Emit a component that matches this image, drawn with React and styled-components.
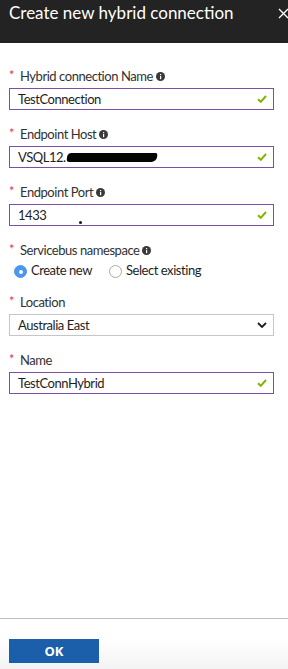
import React from "react";
import styled, { createGlobalStyle } from "styled-components";

const Global = createGlobalStyle`
  html, body { margin: 0; padding: 0; background: #fff; }
  body { font-family: Lato, "Open Sans", sans-serif; color: #323232; }
  * { box-sizing: border-box; }
`;

const Blade = styled.div`
  display: flex;
  flex-direction: column;
  width: 288px;
  height: 669px;
  overflow: hidden;
`;

const Header = styled.header`
  position: relative;
  height: 43px;
  background: #232323;
  color: #fff;
  padding: 2px 0 0 9px;
  flex: none;
`;

const Title = styled.h1`
  margin: 0;
  font-weight: 400;
  font-size: 17px;
  line-height: 22px;
  letter-spacing: 0;
  white-space: nowrap;
`;

const Close = styled.button`
  position: absolute;
  top: 8px;
  right: -1px;
  width: 11px;
  height: 11px;
  padding: 0;
  border: 0;
  background: none;
  display: flex;
`;

const Body = styled.main`
  flex: 1;
  padding: 25px 14px 0 9px;
  display: flex;
  flex-direction: column;
  gap: 16px;
  letter-spacing: -0.45px;
`;

const Field = styled.div`
  display: flex;
  flex-direction: column;
  gap: 4px;
`;

const Label = styled.label`
  display: flex;
  align-items: center;
  height: 16px;
  font-size: 13px;
  line-height: 16px;
  color: #323232;
`;

const Star = styled.span`
  color: #e0393e;
  font-size: 13px;
  width: 11px;
  margin-top: -2px;
`;

const Info = styled.span`
  display: inline-flex;
  margin-left: 3px;
`;

const Box = styled.div`
  position: relative;
  display: flex;
  align-items: center;
  height: 22px;
  border: 1px solid ${(p) => (p.$valid ? "#7c4ea4" : "#c6c6c6")};
  padding: 0 6px 0 8px;
  font-size: 13px;
  color: #1e1e1e;
  background: #fff;
`;

const Value = styled.span`
  flex: 1;
  display: flex;
  align-items: center;
  white-space: nowrap;
`;

const Redaction = styled.span`
  display: inline-block;
  width: 90px;
  height: 9px;
  margin-left: 1px;
  background: #050505;
  border-radius: 4px 2px 5px 3px;
  transform: skewX(-8deg);
`;

const Speck = styled.span`
  position: absolute;
  left: 69px;
  bottom: 1px;
  width: 3px;
  height: 3px;
  border-radius: 50%;
  background: #111;
`;

const RadioRow = styled.div`
  display: flex;
  align-items: center;
  height: 16px;
  padding-left: 5px;
  font-size: 13px;
  color: #1e1e1e;
`;

const RadioOption = styled.span`
  display: flex;
  align-items: center;
  gap: 4px;
  margin-right: 17px;
`;

const RadioDot = styled.span`
  width: 13px;
  height: 13px;
  border-radius: 50%;
  margin-top: 3px;
  display: flex;
  align-items: center;
  justify-content: center;
  background: ${(p) => (p.$on ? "#4a96f0" : "#fff")};
  border: 1px solid ${(p) => (p.$on ? "#4a96f0" : "#a9a9a9")};
  &::after {
    content: "";
    width: 4px;
    height: 4px;
    border-radius: 50%;
    background: ${(p) => (p.$on ? "#fff" : "transparent")};
  }
`;

const Footer = styled.footer`
  flex: none;
  height: 51px;
  border-top: 1px solid #bdbdbd;
  padding: 20px 0 0 9px;
  background: linear-gradient(to bottom, #fff 40%, #f3f3f3 100%);
`;

const OkButton = styled.button`
  width: 90px;
  height: 24px;
  border: 0;
  background: #1b5ea9;
  color: #fff;
  font-family: "Open Sans", sans-serif;
  font-weight: 700;
  font-size: 13px;
  padding: 0;
`;

const Check = () => (
  <svg width="10" height="8" viewBox="0 0 10 8">
    <path d="M1 4.2 L3.8 6.8 L9 1" fill="none" stroke="#83b200" strokeWidth="2" />
  </svg>
);

const InfoIcon = () => (
  <svg width="9" height="9" viewBox="0 0 9 9">
    <circle cx="4.5" cy="4.5" r="4.5" fill="#3a3a3a" />
    <rect x="4" y="4" width="1.2" height="3.2" fill="#fff" />
    <rect x="4" y="2" width="1.2" height="1.2" fill="#fff" />
  </svg>
);

const Chevron = () => (
  <svg width="10" height="6" viewBox="0 0 10 6">
    <path d="M1 1 L5 5 L9 1" fill="none" stroke="#1e1e1e" strokeWidth="1.8" />
  </svg>
);

const FieldLabel = ({ children, info }) => (
  <Label>
    <Star>*</Star>
    {children}
    {info && (
      <Info>
        <InfoIcon />
      </Info>
    )}
  </Label>
);

export default function App() {
  return (
    <>
      <Global />
      <Blade>
        <Header>
          <Title>Create new hybrid connection</Title>
          <Close aria-label="Close">
            <svg width="11" height="11" viewBox="0 0 11 11">
              <path d="M1 1 L10 10 M10 1 L1 10" stroke="#fff" strokeWidth="1.3" />
            </svg>
          </Close>
        </Header>
        <Body>
          <Field>
            <FieldLabel info>Hybrid connection Name</FieldLabel>
            <Box $valid>
              <Value>TestConnection</Value>
              <Check />
            </Box>
          </Field>
          <Field>
            <FieldLabel info>Endpoint Host</FieldLabel>
            <Box $valid>
              <Value>
                VSQL12.
                <Redaction />
              </Value>
              <Check />
            </Box>
          </Field>
          <Field>
            <FieldLabel info>Endpoint Port</FieldLabel>
            <Box $valid>
              <Value>1433</Value>
              <Speck />
              <Check />
            </Box>
          </Field>
          <Field>
            <FieldLabel info>Servicebus namespace</FieldLabel>
            <RadioRow>
              <RadioOption>
                <RadioDot $on />
                Create new
              </RadioOption>
              <RadioOption>
                <RadioDot />
                Select existing
              </RadioOption>
            </RadioRow>
          </Field>
          <Field>
            <FieldLabel>Location</FieldLabel>
            <Box>
              <Value>Australia East</Value>
              <Chevron />
            </Box>
          </Field>
          <Field>
            <FieldLabel>Name</FieldLabel>
            <Box $valid>
              <Value>TestConnHybrid</Value>
              <Check />
            </Box>
          </Field>
        </Body>
        <Footer>
          <OkButton>OK</OkButton>
        </Footer>
      </Blade>
    </>
  );
}
